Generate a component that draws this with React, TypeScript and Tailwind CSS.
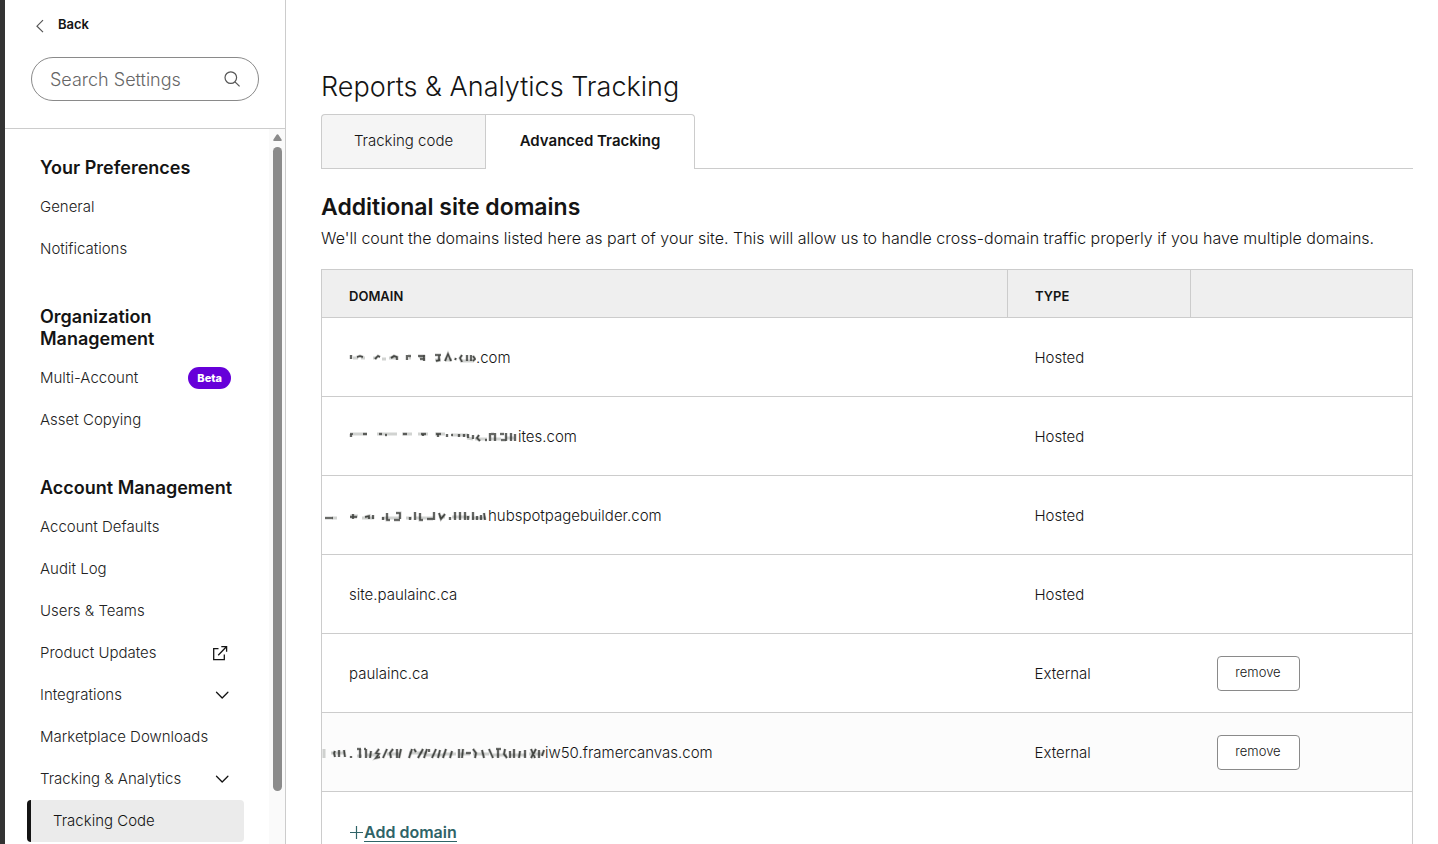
import type { ReactNode } from "react";

type NavItem = { label: string; badge?: string; icon?: "external" | "chevron"; active?: boolean };

const groups: { title: string; items: NavItem[] }[] = [
  { title: "Your Preferences", items: [{ label: "General" }, { label: "Notifications" }] },
  {
    title: "Organization Management",
    items: [{ label: "Multi-Account", badge: "Beta" }, { label: "Asset Copying" }],
  },
  {
    title: "Account Management",
    items: [
      { label: "Account Defaults" },
      { label: "Audit Log" },
      { label: "Users & Teams" },
      { label: "Product Updates", icon: "external" },
      { label: "Integrations", icon: "chevron" },
      { label: "Marketplace Downloads" },
      { label: "Tracking & Analytics", icon: "chevron" },
      { label: "Tracking Code", active: true },
    ],
  },
];

function Chevron() {
  return (
    <svg className="h-4 w-4" viewBox="0 0 16 16" fill="none" stroke="#141414" strokeWidth="1.3" strokeLinecap="round" strokeLinejoin="round">
      <path d="M2.5 5.2 8.2 11l5.7-5.8" />
    </svg>
  );
}

function External() {
  return (
    <svg className="mr-0.5 h-4 w-4" viewBox="0 0 16 16" fill="none" stroke="#141414" strokeWidth="1.3">
      <path d="M6.5 3.6H1.7v11h10.6V9.4M9.3 1.6h5.3v5.2M14.4 1.8 6.2 10.2" />
    </svg>
  );
}

function SidebarItem({ item }: { item: NavItem }) {
  if (item.active) {
    return (
      <a href="#" aria-current="page" className="-ml-[13px] flex h-[42px] items-center rounded border-l-4 border-[#141414] bg-[#ebebeb] pl-[22px] text-[#141414]">
        {item.label}
      </a>
    );
  }
  return (
    <a href="#" className="flex h-[42px] items-center justify-between pr-[14px] whitespace-nowrap">
      {item.label}
      {item.badge && (
        <span className="-mr-px rounded-full bg-[#6600d9] px-[9px] text-[11px] leading-[22px] font-extrabold text-white">{item.badge}</span>
      )}
      {item.icon === "external" && <External />}
      {item.icon === "chevron" && <Chevron />}
    </a>
  );
}

function Sidebar() {
  return (
    <aside className="flex w-[286px] shrink-0 flex-col border-r border-l-[5px] border-r-[#cccccc] border-l-[#333333] bg-white">
      <div className="flex h-[129px] shrink-0 flex-col border-b border-[#cccccc] px-[26px] pt-[14px]">
        <a href="#" className="flex items-center gap-3 pl-1 text-[13px] leading-5 font-semibold text-[#141414]">
          <svg className="mt-1 h-[15px] w-[11px]" viewBox="0 0 11 15" fill="none" stroke="#555" strokeWidth="1.2">
            <path d="M8 1.2 2 7.2l6 6" />
          </svg>
          Back
        </a>
        <label className="mt-[23px] flex h-11 items-center rounded-full border border-[#8a8a8a] pr-[17px] pl-[18px]">
          <input aria-label="Search Settings" placeholder="Search Settings" className="w-full min-w-0 flex-1 text-[18px] font-light outline-none placeholder:text-[#666666]" />
          <svg className="h-[18px] w-[18px] shrink-0" viewBox="0 0 18 18" fill="none" stroke="#555" strokeWidth="1.2">
            <circle cx="7.8" cy="7.6" r="5.8" />
            <path d="m12 11.8 4.6 4.6" />
          </svg>
        </label>
      </div>
      <div className="flex min-h-0 flex-1">
        <nav className="min-w-0 flex-1 overflow-hidden pt-7 pr-[25px] pl-[35px] text-[15px] font-light text-[#222222]">
          {groups.map((g) => (
            <section key={g.title} className="mb-9">
              <h2 className="mb-[7px] text-[18px] leading-[22px] font-semibold text-[#141414]">{g.title}</h2>
              {g.items.map((item) => (
                <SidebarItem key={item.label} item={item} />
              ))}
            </section>
          ))}
        </nav>
        <div className="flex w-4 flex-col items-center bg-[#fafafa] pt-[5px]">
          <svg className="h-2 w-[9px]" viewBox="0 0 9 8">
            <path d="M4.5.2Q5.2.2 5.6.9L8.7 5.8Q9 7 8 7H1Q0 7 .3 5.8L3.4.9Q3.8.2 4.5.2Z" fill="#8a8a8a" />
          </svg>
          <div className="mt-[5px] mb-[53px] w-[9px] flex-1 rounded-full bg-[#8b8b8b]" />
        </div>
      </div>
    </aside>
  );
}

/* Brushed-out part of a domain: short dark flecks over a softer layer. */
function Smudge({ width, strong, faint }: { width: string; strong: string; faint: string }) {
  return (
    <svg className={`h-4 shrink-0 ${width}`} fill="none" aria-hidden="true">
      <path d={faint} stroke="#8c918b" strokeWidth="3" opacity="0.4" />
      <path d={strong} stroke="#20231f" strokeWidth="3" opacity="0.25" />
      <path d={strong} stroke="#20231f" strokeWidth="1.6" opacity="0.75" />
    </svg>
  );
}

const rows: { redacted?: ReactNode; domain: string; type: string; hover?: boolean }[] = [
  {
    redacted: (
      <Smudge
        width="w-[127px]"
        strong="M2 5v4M8 7l3-1 3 1M26 9l3-3 2 1M42 8l3-2 3 1v3M58 5v5M59 6h3M69 6h7M71 9h5M75 5v6M86 5h6M87 11l4-1M90 5v6M96 11l3-7 3 7M106 10l1-2M113 5l-2 3 2 4M118 5v6M122 5v6M124 6l2 3-2 2"
        faint="M4 8h5M12 8h4M24 8h4M33 9h4M40 8h8M60 8h2M70 7h5M86 10h6M96 10h7M113 11h12"
      />
    ),
    domain: ".com",
    type: "Hosted",
  },
  {
    redacted: (
      <Smudge
        width="w-[169px]"
        strong="M1 5h3M2 5v3M14 5h4M30 5h3M36 6h2M54 5h4M72 5h5M74 5v2M87 5h5M89 5v3M98 5v3M102 6h2M110 5v3M115 5v3M119 5v4M124 6v4M130 6l-2 3 3 3M136 11h2M141 4v8M142 5h3M146 4v8M151 5h4M152 11h5M157 4v8M162 4v8M166 5v7"
        faint="M4 5h14M28 5h20M53 5h10M69 5h10M86 5h10M103 6h16M118 9l6 1M126 10h12M142 10h10M157 9h8"
      />
    ),
    domain: "ites.com",
    type: "Hosted",
  },
  {
    redacted: (
      <Smudge
        width="w-[166px] -ml-[27px]"
        strong="M3 10h8M28 9h7M31 6v5M43 9l4-1v3M51 7v4M61 9v3M65 5v7h3M74 5h4v6M72 12h6M88 9v3M93 4v8M98 5v7h3M105 11h6M112 4v8M117 5l2 6 4-5M128 9v3M133 4v8M138 4v8M143 4v8M146 8v4M151 4v8M155 8v4M159 7v5M162 5l1 7"
        faint="M10 10h5M28 8h8M40 10h12M60 10h18M84 10h6M94 10h18M117 9h6M130 9h18M150 10h14"
      />
    ),
    domain: "hubspotpagebuilder.com",
    type: "Hosted",
  },
  { domain: "site.paulainc.ca", type: "Hosted" },
  { domain: "paulainc.ca", type: "External" },
  {
    redacted: (
      <Smudge
        width="w-[223px] -ml-[27px]"
        strong="M13 6l-1 2 1 4M17 5v7M22 5l1 7M29 11v2M35 4h4M38 4v9M44 4v9M42 4h2M49 6l-1 7M57 4l-3 4 3 1-3 4 4-1M61 13l4-9M71 4l-3 4 1 5M75 4v9M79 4l-2 9M87 13l3-9M92 4l2 3M96 13l5-9M102 13l3-9M107 4v3M110 13l4-9M118 5l-2 8M124 4l-3 9M130 6l-2 7M137 4v9M141 4l-1 9M144 8h5M151 4l3 4-1 5M160 5l2 8M167 4l4 9M174 4h5M176 4v9M183 4l-1 5 3 4M188 6v7M192 4v9M198 6l-1 7M203 5v8M209 4l4 9M214 4l-5 9M217 5v8M222 5l-2 6"
        faint="M2 4v9M9 8h14M35 11h5M45 10h11M65 9h12M87 8h18M104 10h18M121 9h13M138 9h10M151 9h16M171 10h14M188 10h16M207 9h14"
      />
    ),
    domain: "iw50.framercanvas.com",
    type: "External",
    hover: true,
  },
];

function DomainTable() {
  return (
    <table className="mt-5 w-full table-fixed border-collapse border border-[#cccccc] text-left text-[15px] font-light">
      <thead>
        <tr className="h-12 bg-[#efefef] text-[13px] text-[#141414]">
          <th className="border border-[#cccccc] pt-1.5 pl-[27px] font-semibold">DOMAIN</th>
          <th className="w-[183px] border border-[#cccccc] pt-1.5 pl-[27px] font-semibold">TYPE</th>
          <th aria-label="Actions" className="w-[222px] border border-[#cccccc]" />
        </tr>
      </thead>
      <tbody>
        {rows.map((row) => (
          <tr key={row.domain} className={`h-[79px] border-b border-[#cccccc] ${row.hover ? "bg-[#fcfcfc]" : ""}`}>
            <td className="pt-0.5 pl-[27px]">
              <div className="flex items-center">
                {row.redacted}
                {row.domain}
              </div>
            </td>
            <td className="pt-0.5 pl-[27px]">{row.type}</td>
            <td className="pl-[26px]">
              {row.type === "External" && (
                <button className="block h-[35px] w-[83px] rounded border border-[#8a8a8a] bg-white text-[13px]">remove</button>
              )}
            </td>
          </tr>
        ))}
        <tr className="h-[79px]">
          <td colSpan={3} className="pt-0.5 pl-[27px]">
            <button className="flex items-center text-[16px] font-semibold text-[#2f6367]">
              <svg className="h-[15px] w-[15px]" viewBox="0 0 15 15" stroke="currentColor" strokeWidth="1.2">
                <path d="M7.5 1v13M1 7.5h13" />
              </svg>
              <span className="border-b border-[#2f6367] leading-[18px]">Add domain</span>
            </button>
          </td>
        </tr>
      </tbody>
    </table>
  );
}

export default function App() {
  return (
    <div className="flex h-screen overflow-hidden bg-white font-['Inter','Liberation_Sans',sans-serif] text-[#141414]">
      <Sidebar />
      <main className="min-w-0 flex-1 overflow-hidden bg-white pt-[70px] pr-[25px] pl-[35px]">
        <h1 className="text-[27px] leading-[34px] font-light">Reports &amp; Analytics Tracking</h1>
        <div role="tablist" className="mt-[10px] flex h-[55px] text-[15px]">
          <button role="tab" aria-selected="false" className="w-[164px] rounded-tl border border-r-0 border-[#cccccc] bg-[#f5f5f5] font-light">
            Tracking code
          </button>
          <button role="tab" aria-selected="true" className="w-[210px] rounded-tr border border-b-0 border-[#cccccc] bg-white pb-0.5 font-semibold">
            Advanced Tracking
          </button>
          <div className="flex-1 border-b border-[#cccccc]" />
        </div>
        <h2 className="mt-6 text-[23px] leading-7 font-semibold">Additional site domains</h2>
        <p className="mt-[6px] text-[16px] leading-[22px] font-light">
          We'll count the domains listed here as part of your site. This will allow us to handle cross-domain traffic properly if you have multiple domains.
        </p>
        <DomainTable />
      </main>
    </div>
  );
}
